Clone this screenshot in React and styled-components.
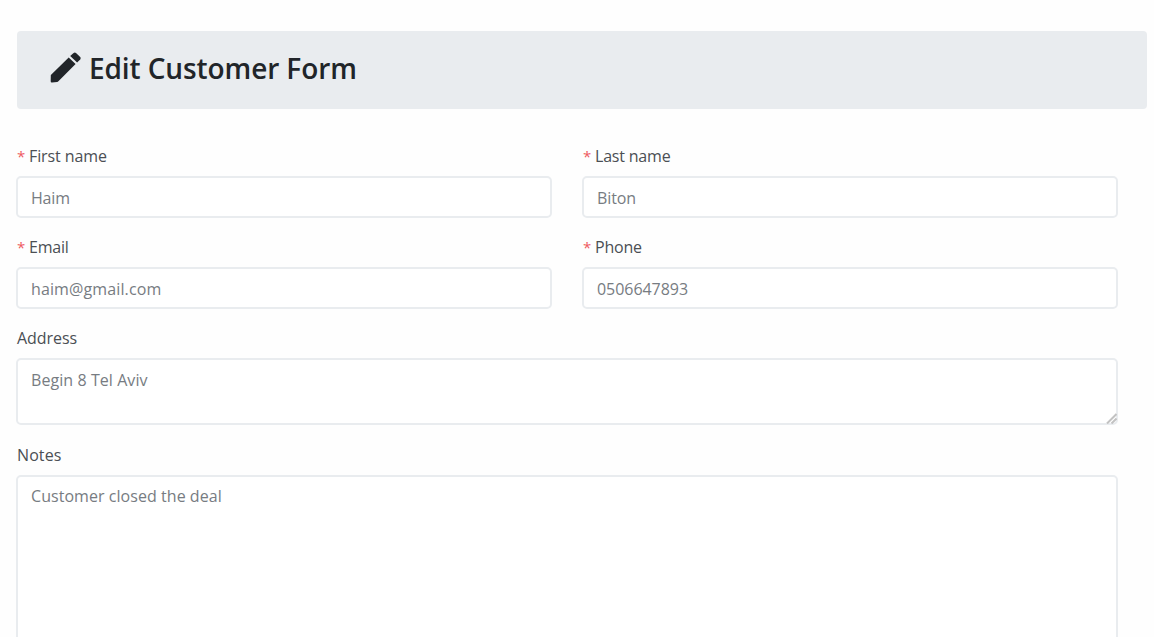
import React from "react";
import styled, { createGlobalStyle } from "styled-components";

const GlobalStyle = createGlobalStyle`
  * { box-sizing: border-box; }
  body {
    margin: 0;
    background: #fefefe;
    color: #212529;
    font-family: "Open Sans", "Noto Sans", sans-serif;
    overflow: hidden;
  }
`;

const Page = styled.main`
  height: 637px;
  padding: 31px 7px 0 17px;
  overflow: hidden;
`;

const Banner = styled.header`
  display: flex;
  align-items: flex-start;
  height: 78px;
  padding: 21px 0 0 33px;
  border-radius: 4px;
  background: #e9ecef;
`;

const PencilIcon = styled.svg`
  flex: none;
  width: 31px;
  height: 31px;
  margin-right: 8px;
  fill: #212529;
`;

const Title = styled.h1`
  margin: 0;
  font-size: 28px;
  font-weight: 600;
  line-height: 32px;
  letter-spacing: -0.1px;
  white-space: nowrap;
`;

const Form = styled.form`
  display: grid;
  grid-template-columns: 1fr 1fr;
  column-gap: 30px;
  width: 1102px;
  margin-top: 35px;
  margin-left: -1px;
`;

const Group = styled.label`
  display: block;
  grid-column: ${(p) => (p.$wide ? "1 / -1" : "auto")};
  height: ${(p) => p.$height || 91}px;
`;

const Caption = styled.span`
  display: block;
  height: 32px;
  padding-left: 1px;
  font-size: 16px;
  line-height: 24px;
  color: #4b4f54;
  letter-spacing: ${(p) => p.$spacing}px;
  white-space: nowrap;
`;

const Star = styled.span`
  display: inline-block;
  width: 12px;
  font-size: 15px;
  letter-spacing: 0;
  color: #ee5a5f;
`;

const Input = styled.input`
  display: block;
  width: 100%;
  height: 42px;
  padding: 2px 13px 0;
  border: 2px solid #e9ecef;
  border-radius: 5px;
  outline: none;
  background: #fff;
  font: 16px "Open Sans", "Noto Sans", sans-serif;
  letter-spacing: ${(p) => p.$spacing}px;
  color: #777c82;
`;

const AreaFrame = styled.span`
  display: block;
  position: relative;
`;

const Area = styled.textarea`
  display: block;
  width: 100%;
  height: ${(p) => p.$height}px;
  padding: ${(p) => p.$padTop}px 13px 7px;
  border: 2px solid #e9ecef;
  border-radius: 5px;
  outline: none;
  resize: none;
  overflow: hidden;
  background: #fff;
  font: 16px/24px "Open Sans", "Noto Sans", sans-serif;
  letter-spacing: ${(p) => p.$spacing}px;
  color: #777c82;
`;

const Grip = styled.svg`
  position: absolute;
  right: 1px;
  bottom: 1px;
  width: 11px;
  height: 11px;
  stroke: #c2c2c2;
  fill: none;
`;

function TextField({ label, value, labelSpacing, spacing }) {
  return (
    <Group>
      <Caption $spacing={labelSpacing}>
        <Star>*</Star>
        {label}
      </Caption>
      <Input type="text" defaultValue={value} $spacing={spacing} />
    </Group>
  );
}

function AreaField({ label, value, labelSpacing, spacing, height, padTop = 7, groupHeight, grip }) {
  return (
    <Group $wide $height={groupHeight}>
      <Caption $spacing={labelSpacing}>{label}</Caption>
      <AreaFrame>
        <Area defaultValue={value} $height={height} $padTop={padTop} $spacing={spacing} />
        {grip && (
          <Grip viewBox="0 0 11 11">
            <path d="M1 10.5 10.5 1M5.5 10.5l5-5" strokeWidth="2" />
          </Grip>
        )}
      </AreaFrame>
    </Group>
  );
}

export default function App() {
  return (
    <Page>
      <GlobalStyle />
      <Banner>
        <PencilIcon viewBox="0 0 31 31">
          <path d="M1.1 22.8 18.7 5.5 25.6 12 8.4 29.3Q7.9 29.9 7.1 30L2 30.5Q.6 30.6.7 29.2L.8 23.6Q.8 23.1 1.1 22.8Z" />
          <path d="M20.2 4 23.6.9Q24.8 0 26 .9L30.2 5.1Q31.1 6.2 30.2 7.4L27.1 10.6Z" />
        </PencilIcon>
        <Title>Edit Customer Form</Title>
      </Banner>
      <Form>
        <TextField label="First name" value="Haim" labelSpacing={-0.1} spacing={-0.2} />
        <TextField label="Last name" value="Biton" labelSpacing={-0.2} spacing={-0.1} />
        <TextField label="Email" value="haim@gmail.com" labelSpacing={-0.2} spacing={0.12} />
        <TextField label="Phone" value="0506647893" labelSpacing={-0.2} spacing={-0.05} />
        <AreaField label="Address" value="Begin 8 Tel Aviv" labelSpacing={-0.05} spacing={0.07} height={67} padTop={8} groupHeight={117} grip />
        <AreaField label="Notes" value="Customer closed the deal" labelSpacing={0.1} spacing={0.05} height={200} groupHeight={233} />
      </Form>
    </Page>
  );
}
